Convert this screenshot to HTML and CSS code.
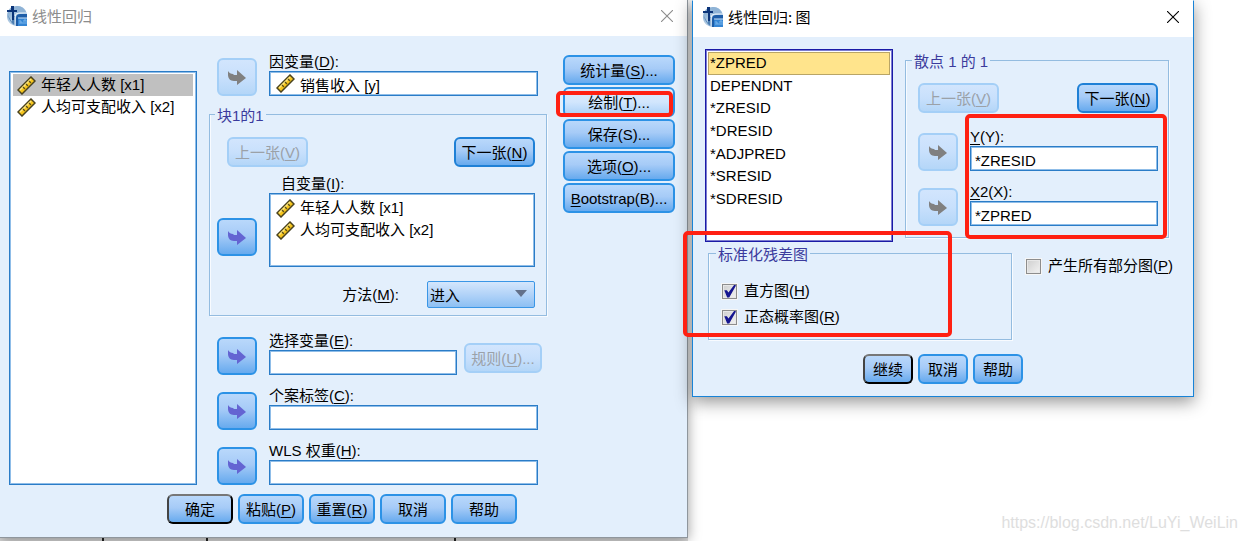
FILE: index.html
```html
<!DOCTYPE html>
<html lang="zh-CN">
<head>
    <meta charset="UTF-8">
    <meta name="viewport" content="width=device-width, initial-scale=1.0">
    <title>线性回归</title>
    <link rel="stylesheet" href="styles.css">
</head>
<body>
    <!-- shared icons -->
    <svg class="sprite" aria-hidden="true">
        <defs>
            <linearGradient id="globe" x1="0" y1="0" x2="1" y2="1">
                <stop offset="0" stop-color="#6f9cc8"/>
                <stop offset="0.5" stop-color="#b4cde4"/>
                <stop offset="1" stop-color="#2b6cb8"/>
            </linearGradient>
        </defs>
        <symbol id="app" viewBox="0 0 20 20">
            <path d="M10 0C16 0 20 4 20 10V20H9C4 19 0 16 0 10S4 0 10 0z" fill="url(#globe)"/>
            <path d="M1 9C2 14 5 18 8 19V10H5V16L3 13z" fill="#4d7fb3"/>
            <path d="M10 0C15 0 18 3 19 7H9V0z" fill="#8fb3d6"/>
            <path d="M4 0H7V4H10V6H7V14H5V6H0V4H4z" fill="#0b3479"/>
            <path d="M9 20V12Q9 8 13 8H20V20z" fill="#1d5da8"/>
            <path d="M8 20V11Q8 7 12 7H20" fill="none" stroke="#e9f3fb"/>
            <path d="M11 20V14Q11 12 13 12H20V20z" fill="#3485d4"/>
            <path d="M11 12H20" stroke="#cfe3f5"/>
            <path d="M13 14V18M13 16H15V18M17 14V18M17 14H19V18" fill="none" stroke="#79b5ec"/>
        </symbol>
        <symbol id="arrow" viewBox="0 0 18 15">
            <path d="M0 1C1 3 3 4 5 4L6 5H9V0L18 8L9 15V11H6C2 11 0 8 0 5z" fill="currentColor"/>
        </symbol>
        <symbol id="ruler" viewBox="0 0 19 19">
            <path d="M1 14L14 1L18 5L5 18z" fill="#f6c51d" stroke="#49421f" stroke-width="1.5"/>
            <path d="M3 14L14 3" stroke="#ffe982" stroke-width="1.5"/>
            <path d="M6 11L8 13M9 8L11 10M12 5L14 7" stroke="#5b501c" stroke-width="1.3"/>
        </symbol>
        <symbol id="close" viewBox="0 0 12 12">
            <path d="M0 0L12 12M12 0L0 12" fill="none" stroke="currentColor" stroke-width="1.1"/>
        </symbol>
    </svg>

    <main class="desktop">
        <div class="pane">
            <section class="window inactive">
                <header class="titlebar">
                    <svg class="app-icon"><use href="#app"/></svg>
                    <h1>线性回归</h1>
                    <button class="close" type="button" aria-label="关闭"><svg><use href="#close"/></svg></button>
                </header>
                <form class="content regression">
                    <div class="columns">
                        <ul class="box source">
                            <li class="picked"><svg class="ruler"><use href="#ruler"/></svg>年轻人人数 [x1]</li>
                            <li><svg class="ruler"><use href="#ruler"/></svg>人均可支配收入 [x2]</li>
                        </ul>

                        <div class="fields">
                            <div class="row">
                                <button class="btn move" type="button" aria-label="移动因变量" disabled><svg><use href="#arrow"/></svg></button>
                                <div class="field">
                                    <label for="dependent">因变量(<u>D</u>):</label>
                                    <div class="box with-icon">
                                        <svg class="ruler"><use href="#ruler"/></svg>
                                        <input id="dependent" type="text" value="销售收入 [y]">
                                    </div>
                                </div>
                            </div>

                            <fieldset class="group block">
                                <legend>块1的1</legend>
                                <div class="pager">
                                    <button class="btn" type="button" disabled>上一张(<u>V</u>)</button>
                                    <button class="btn strong" type="button">下一张(<u>N</u>)</button>
                                </div>
                                <div class="row independents">
                                    <button class="btn move" type="button" aria-label="移动自变量"><svg><use href="#arrow"/></svg></button>
                                    <div class="field">
                                        <span class="caption">自变量(<u>I</u>):</span>
                                        <ul class="box">
                                            <li><svg class="ruler"><use href="#ruler"/></svg>年轻人人数 [x1]</li>
                                            <li><svg class="ruler"><use href="#ruler"/></svg>人均可支配收入 [x2]</li>
                                        </ul>
                                    </div>
                                </div>
                                <div class="method">
                                    <label for="method">方法(<u>M</u>):</label>
                                    <div class="dropdown">
                                        <select id="method"><option>进入</option></select>
                                        <svg viewBox="0 0 12 7"><path d="M0 0H12L6 7z" fill="#63718a"/></svg>
                                    </div>
                                </div>
                            </fieldset>

                            <div class="row selection">
                                <button class="btn move" type="button" aria-label="移动选择变量"><svg><use href="#arrow"/></svg></button>
                                <div class="field">
                                    <label for="selection">选择变量(<u>E</u>):</label>
                                    <input class="box" id="selection" type="text">
                                </div>
                                <button class="btn rule" type="button" disabled>规则(<u>U</u>)...</button>
                            </div>
                            <div class="row">
                                <button class="btn move" type="button" aria-label="移动个案标签"><svg><use href="#arrow"/></svg></button>
                                <div class="field">
                                    <label for="case-label">个案标签(<u>C</u>):</label>
                                    <input class="box" id="case-label" type="text">
                                </div>
                            </div>
                            <div class="row">
                                <button class="btn move" type="button" aria-label="移动权重"><svg><use href="#arrow"/></svg></button>
                                <div class="field">
                                    <label for="weight">WLS 权重(<u>H</u>):</label>
                                    <input class="box" id="weight" type="text">
                                </div>
                            </div>
                        </div>

                        <div class="side">
                            <button class="btn" type="button">统计量(<u>S</u>)...</button>
                            <div class="marked">
                                <button class="btn hover" type="button">绘制(<u>T</u>)...</button>
                                <span class="mark mark-plot"></span>
                            </div>
                            <button class="btn" type="button">保存(S)...</button>
                            <button class="btn" type="button">选项(<u>O</u>)...</button>
                            <button class="btn" type="button"><u>B</u>ootstrap(B)...</button>
                        </div>
                    </div>
                    <div class="actions wide">
                        <button class="btn default" type="button">确定</button>
                        <button class="btn" type="button">粘贴(<u>P</u>)</button>
                        <button class="btn" type="button">重置(<u>R</u>)</button>
                        <button class="btn" type="button">取消</button>
                        <button class="btn" type="button">帮助</button>
                    </div>
                </form>
            </section>
            <!-- top edge of the table behind the dialog -->
            <div class="sheet"><i></i><i></i><i></i></div>
        </div>

        <section class="window active">
            <header class="titlebar">
                <svg class="app-icon"><use href="#app"/></svg>
                <h1>线性回归: 图</h1>
                <button class="close" type="button" aria-label="关闭"><svg><use href="#close"/></svg></button>
            </header>
            <form class="content plots">
                <div class="top">
                    <div class="box names">
                        <ul>
                            <li class="picked">*ZPRED</li>
                            <li>DEPENDNT</li>
                            <li>*ZRESID</li>
                            <li>*DRESID</li>
                            <li>*ADJPRED</li>
                            <li>*SRESID</li>
                            <li>*SDRESID</li>
                        </ul>
                    </div>
                    <fieldset class="group scatter">
                        <legend>散点 1 的 1</legend>
                        <div class="pager">
                            <button class="btn" type="button" disabled>上一张(<u>V</u>)</button>
                            <button class="btn strong" type="button">下一张(<u>N</u>)</button>
                        </div>
                        <div class="axes marked">
                            <div class="row">
                                <button class="btn move" type="button" aria-label="移动 Y" disabled><svg><use href="#arrow"/></svg></button>
                                <div class="field">
                                    <label for="axis-y"><u>Y</u>(Y):</label>
                                    <input class="box" id="axis-y" type="text" value="*ZRESID">
                                </div>
                            </div>
                            <div class="row">
                                <button class="btn move" type="button" aria-label="移动 X" disabled><svg><use href="#arrow"/></svg></button>
                                <div class="field">
                                    <label for="axis-x"><u>X</u>2(X):</label>
                                    <input class="box" id="axis-x" type="text" value="*ZPRED">
                                </div>
                            </div>
                            <span class="mark mark-axes"></span>
                        </div>
                    </fieldset>
                </div>
                <div class="bottom">
                    <div class="residual marked">
                        <fieldset class="group">
                            <legend>标准化残差图</legend>
                            <label class="check"><input type="checkbox" checked><span>直方图(<u>H</u>)</span></label>
                            <label class="check"><input type="checkbox" checked><span>正态概率图(<u>R</u>)</span></label>
                        </fieldset>
                        <span class="mark mark-residual"></span>
                    </div>
                    <label class="check partial"><input type="checkbox"><span>产生所有部分图(<u>P</u>)</span></label>
                </div>
                <div class="actions">
                    <button class="btn default" type="button">继续</button>
                    <button class="btn" type="button">取消</button>
                    <button class="btn" type="button">帮助</button>
                </div>
            </form>
        </section>
    </main>
    <p class="watermark">https://blog.csdn.net/LuYi_WeiLin</p>
</body>
</html>
```
FILE: styles.css
```css
:root {
    --panel: #e3effc;
    --line: #2a7cc7;
    --group-line: #94bce0;
    --btn-line: #2c92e6;
    --mark: #ff2012;
}
* {
    box-sizing: border-box;
}
body {
    margin: 0;
    background: #fff;
    color: #000;
    font-family: "Liberation Sans", "Noto Sans CJK SC", sans-serif;
    font-size: 15px;
    line-height: 18px;
}
button, input, select {
    font: inherit;
    color: inherit;
}
ul {
    list-style: none;
    margin: 0;
    padding: 0;
}
u {
    text-underline-offset: 2px;
    text-decoration-thickness: 1px;
}
.sprite {
    position: absolute;
    width: 0;
    height: 0;
}
.desktop {
    display: flex;
    align-items: flex-start;
    gap: 4px;
    padding-right: 52px;
    overflow: hidden;
}

/* windows */
.pane {
    flex: 688 1 0;
    min-width: 0;
}
.window {
    position: relative;
    background: var(--panel);
}
.inactive {
    border: solid #8f969d;
    border-width: 0 1px 1px 0;
    box-shadow: 0 2px 12px rgba(0, 0, 0, 0.4);
}
.active {
    flex: 500 1 0;
    min-width: 0;
    border: 1px solid #1883d7;
    border-top-color: #fff;
    box-shadow: 0 5px 16px rgba(0, 0, 0, 0.42);
}
.titlebar {
    display: flex;
    align-items: center;
    gap: 5px;
    height: 36px;
    padding: 0 14px 4px 7px;
    background: #fff;
}
.active .titlebar {
    padding-left: 10px;
}
.titlebar h1 {
    flex: 1;
    margin: 0;
    font-size: 15px;
    font-weight: normal;
    font-family: "Noto Sans CJK SC", sans-serif;
}
.inactive h1, .inactive .close {
    color: #8c8c8c;
}
.app-icon {
    width: 20px;
    height: 20px;
}
.close {
    display: flex;
    padding: 0;
    border: 0;
    background: none;
}
.close svg {
    width: 12px;
    height: 12px;
    overflow: visible;
}

/* buttons */
.btn {
    display: flex;
    align-items: center;
    justify-content: center;
    height: 30px;
    padding: 2px 0 0;
    border: 2px solid var(--btn-line);
    border-radius: 6px;
    background: linear-gradient(#b9d8fb, #a6cbf7 45%, #67aaee);
    white-space: nowrap;
}
.btn.strong {
    border-color: #1f80d6;
}
.btn.hover {
    background: linear-gradient(#dcebfd, #d2e6fd 50%, #a9d0f8);
}
.btn.default {
    border-color: #777 #000 #000 #444;
}
.btn:disabled {
    border-color: #a4cff7;
    background: linear-gradient(#d2e5fd, #c8e0fc 50%, #b4d6f8);
    color: #9ba1a8;
}
.move {
    flex: none;
    width: 40px;
    height: 38px;
    padding: 0;
    color: #6464d2;
}
.move:disabled {
    color: #808080;
}
.move svg {
    width: 18px;
    height: 15px;
}

/* boxes and fields */
.box {
    display: block;
    width: 100%;
    border: 1px solid var(--line);
    outline: 1px solid #8fbde8;
    outline-offset: -2px;
    border-radius: 0;
    background: #fff;
}
.box li {
    display: flex;
    align-items: center;
    gap: 5px;
    height: 22px;
    padding-left: 4px;
    white-space: nowrap;
}
.ruler {
    flex: none;
    width: 19px;
    height: 19px;
}
input.box, .with-icon {
    height: 25px;
    padding: 3px 4px 0;
}
.with-icon {
    display: flex;
    gap: 5px;
    padding: 2px 6px 0;
}
.with-icon input {
    flex: 1;
    min-width: 0;
    height: 20px;
    padding: 0;
    border: 0;
    background: none;
}
.row {
    display: flex;
    align-items: flex-end;
    gap: 12px;
}
.field {
    flex: 1;
    min-width: 0;
}
.field label, .caption {
    display: block;
    height: 18px;
    white-space: nowrap;
}
.group {
    min-width: 0;
    margin: 0;
    padding: 12px;
    border: 1px solid var(--group-line);
    box-shadow: 1px 1px 0 #f8fbff, inset 1px 0 0 #f8fbff;
}
.group legend {
    margin-left: -6px;
    padding: 4px 2px 0;
    background: var(--panel);
    color: #3b3b9d;
}
.pager {
    display: flex;
    justify-content: space-between;
}
.pager .btn {
    width: 81px;
}
.actions {
    display: flex;
    justify-content: center;
    gap: 5px;
}
.actions .btn {
    width: 50px;
}
.wide .btn {
    width: 66px;
}

/* regression dialog */
.regression {
    padding: 17px 12px 13px 9px;
}
.columns {
    display: grid;
    grid-template-columns: 188fr 366fr 112px;
}
.source {
    width: auto;
    margin: 18px 0 0;
    padding: 2px 3px;
}
.source .picked {
    background: #c0c0c0;
}
.fields {
    display: flex;
    flex-direction: column;
    gap: 12px;
    min-width: 0;
    margin: 0 16px 0 12px;
}
.fields > .row {
    padding: 0 9px 0 8px;
}
.block {
    margin: -5px 0 4px;
    padding: 12px 11px 7px 7px;
}
.block legend {
    margin-left: -2px;
}
.block .pager {
    padding-left: 10px;
}
.independents {
    padding-top: 8px;
}
.independents .move {
    margin-bottom: 11px;
}
.independents .caption {
    padding-left: 12px;
}
.independents ul {
    height: 74px;
    padding: 3px 2px;
}
.method {
    display: flex;
    align-items: center;
    justify-content: flex-end;
    gap: 28px;
    margin-top: 14px;
}
.dropdown {
    position: relative;
    width: 108px;
}
.dropdown select {
    display: block;
    width: 100%;
    height: 27px;
    padding: 3px 2px 0;
    border: 1px solid #3a96e6;
    border-radius: 2px;
    appearance: none;
    background: linear-gradient(#d4e6fc, #b2d3f8 50%, #8dc0f3);
}
.dropdown svg {
    position: absolute;
    top: 9px;
    right: 8px;
    width: 12px;
    height: 7px;
    pointer-events: none;
}
.fields > .selection {
    gap: 7px;
    padding-right: 5px;
}
.selection .field {
    margin-left: 5px;
}
.rule {
    width: 78px;
    margin-bottom: 2px;
}
.side {
    display: flex;
    flex-direction: column;
    gap: 2px;
    padding-top: 2px;
}
.side .btn {
    width: 100%;
}
.regression .actions {
    padding-top: 9px;
}
.sheet {
    display: flex;
    height: 3px;
    background: #dcdcdc;
}
.sheet i {
    width: 104px;
    border-right: 2px solid #222;
}
.sheet i:last-child {
    width: 248px;
}

/* plots dialog */
.plots {
    padding: 12px 20px 12px 12px;
}
.top {
    display: grid;
    grid-template-columns: 200fr 264fr;
    align-items: start;
    padding-right: 4px;
}
.names {
    width: auto;
    height: 193px;
    margin-right: 12px;
    padding: 2px;
    border-color: #1a1aa6;
    outline-color: #7c7cd0;
}
.names ul {
    display: grid;
    grid-auto-rows: 1fr;
    height: 158px;
}
.names li {
    height: auto;
    padding-left: 2px;
}
.names .picked {
    border: 1px solid #b9a566;
    padding-left: 1px;
    background: #ffe48c;
}
.scatter {
    padding: 12px 10px 11px 12px;
}
.axes {
    display: grid;
    gap: 12px;
    padding-top: 15px;
}
.bottom {
    display: flex;
    gap: 14px;
    padding-left: 3px;
}
.residual {
    flex: 1;
    min-width: 0;
}
.residual .group {
    padding: 14px 13px 9px;
}
.check {
    display: flex;
    align-items: center;
    gap: 7px;
    height: 26px;
    white-space: nowrap;
}
.partial {
    margin-top: 11px;
}
.check input {
    position: relative;
    width: 15px;
    height: 15px;
    margin: 0;
    appearance: none;
    border: 1px solid #8d8d8d;
    outline: 1px solid #f6f6f6;
    background: linear-gradient(135deg, #cfcfcf, #f2f2f2);
    box-shadow: inset 0 0 0 1px #e8e8e8;
}
.check input:checked::before {
    content: "";
    position: absolute;
    inset: 0;
    background: #151590;
    clip-path: polygon(10% 45%, 30% 45%, 42% 62%, 88% 0, 100% 8%, 48% 100%, 32% 100%);
}
.plots .actions {
    padding-top: 14px;
    padding-left: 8px;
}

/* red frames over the controls */
.marked {
    position: relative;
}
.mark {
    position: absolute;
    z-index: 2;
    border: 4px solid var(--mark);
    border-radius: 5px;
    pointer-events: none;
}
.mark-plot {
    inset: 4px 2px 0 -7px;
}
.mark-axes {
    inset: 1px -9px -13px 47px;
}
.mark-residual {
    inset: -11px 60px 3px -25px;
}
.watermark {
    position: absolute;
    right: 8px;
    bottom: 9px;
    margin: 0;
    color: #dedede;
    font-size: 16px;
}
```
